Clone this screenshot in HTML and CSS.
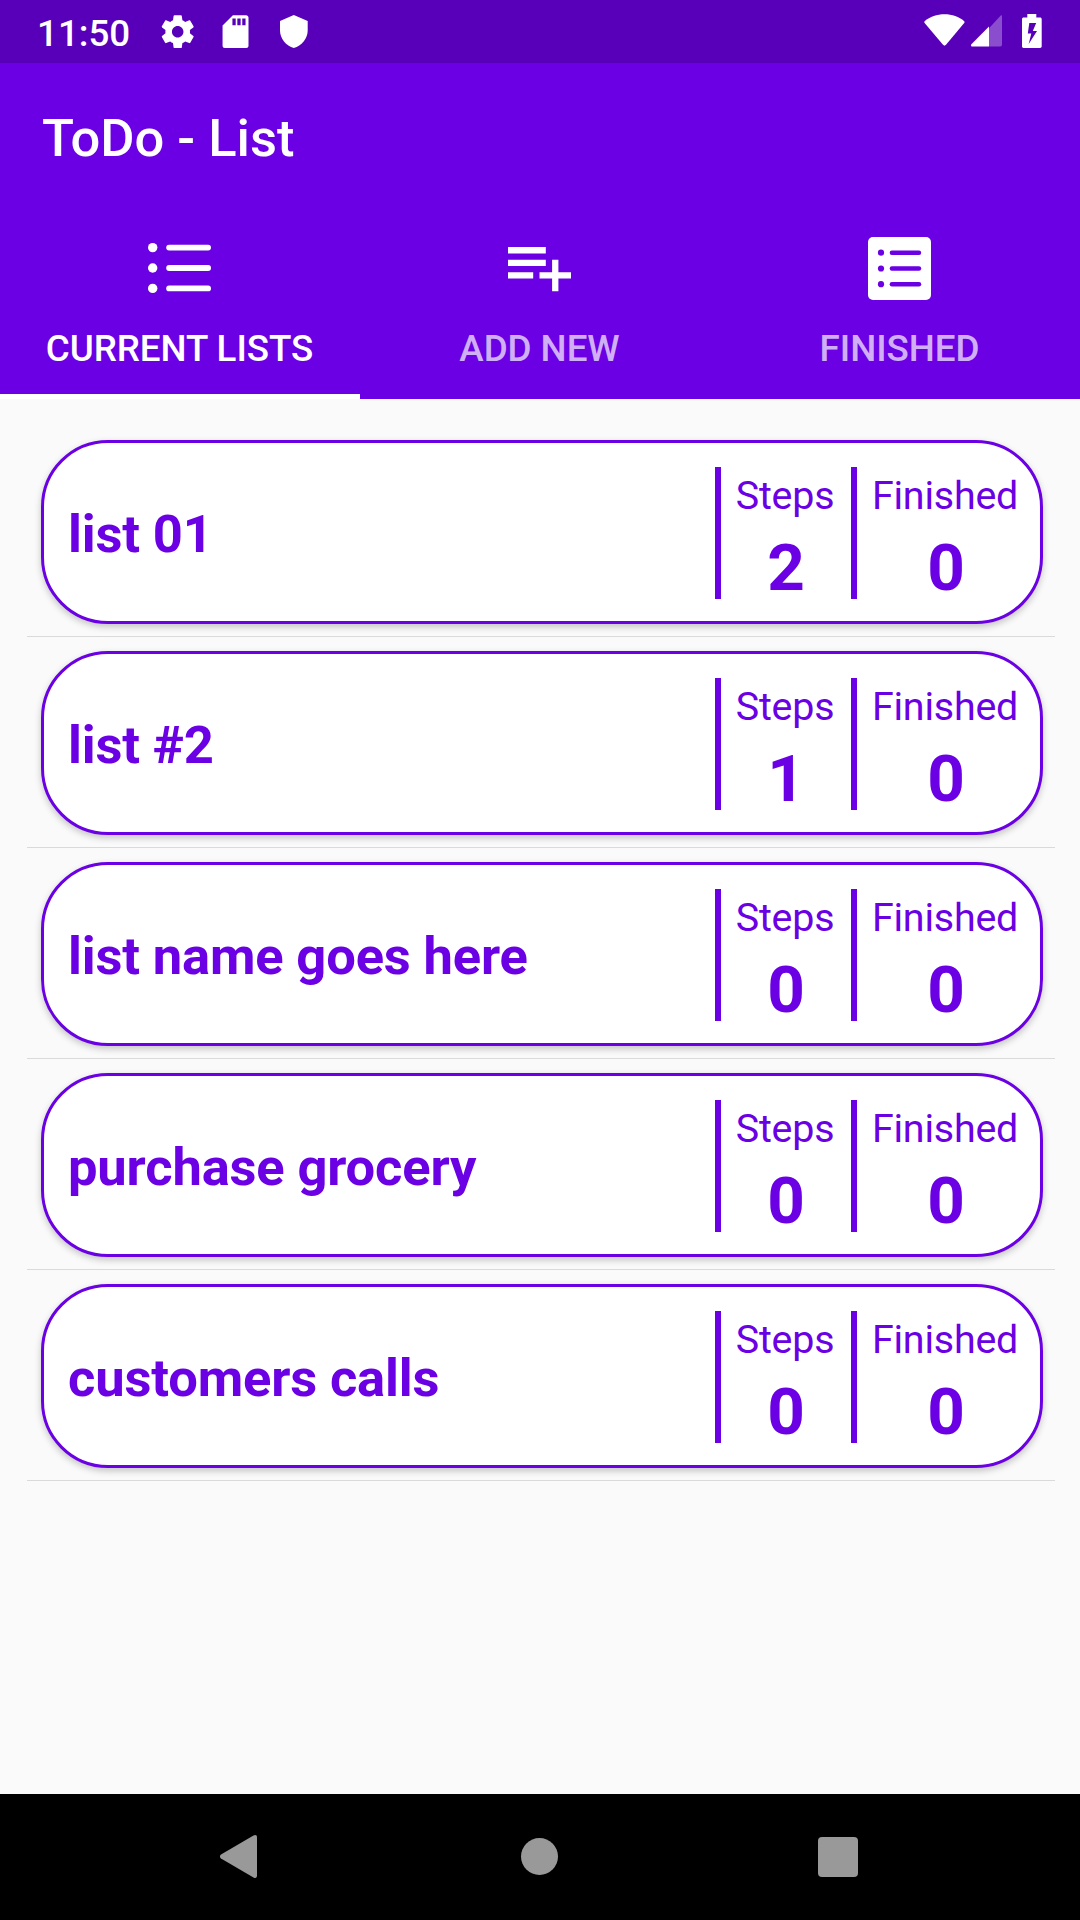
FILE: index.html
```html
<!DOCTYPE html>
<html lang="en">
<head>
	<meta charset="utf-8">
	<title>ToDo - List</title>
	<link rel="stylesheet" href="styles.css">
</head>
<body>
	<div class="screen">
		<!-- status bar -->
		<div class="status">
			<span class="time">11:50</span>
			<svg class="gear" viewBox="0 0 24 24"><path d="M19.43 12.98c.04-.32.07-.64.07-.98s-.03-.66-.07-.98l2.11-1.65c.19-.15.24-.42.12-.64l-2-3.46c-.12-.22-.39-.3-.61-.22l-2.49 1c-.52-.4-1.08-.73-1.69-.98l-.38-2.65C14.46 2.18 14.25 2 14 2h-4c-.25 0-.46.18-.49.42l-.38 2.65c-.61.25-1.17.59-1.69.98l-2.49-1c-.23-.09-.49 0-.61.22l-2 3.46c-.13.22-.07.49.12.64l2.11 1.65c-.04.32-.07.65-.07.98s.03.66.07.98l-2.11 1.65c-.19.15-.24.42-.12.64l2 3.46c.12.22.39.3.61.22l2.49-1c.52.4 1.08.73 1.69.98l.38 2.65c.03.24.24.42.49.42h4c.25 0 .46-.18.49-.42l.38-2.65c.61-.25 1.17-.59 1.69-.98l2.49 1c.23.09.49 0 .61-.22l2-3.46c.12-.22.07-.49-.12-.64l-2.11-1.65zM12 15.5c-1.93 0-3.5-1.57-3.5-3.5s1.57-3.5 3.5-3.5 3.5 1.57 3.5 3.5-1.57 3.5-3.5 3.5z"/></svg>
			<svg class="sd" viewBox="0 0 24 24"><path d="M18.3 2h-8L4 8.2V20.6c0 .8.6 1.4 1.4 1.4h13c.8 0 1.4-.6 1.4-1.4V3.4c0-.8-.6-1.4-1.5-1.4zM12 8h-2V4h2v4zm3 0h-2V4h2v4zm3 0h-2V4h2v4z"/></svg>
			<svg class="shield" viewBox="0 0 28 33"><path d="M13.8 0L27.7 6v9.5C27.7 23.500 21.500 31 13.800 33 6.100 31 0 23.500 0 15.500V6z"/></svg>
			<div class="status-right">
				<svg class="wifi" viewBox="0 0 41 32"><path d="M.6 7.200C6 2.500 13 .2 20.500.2S35 2.500 40.200 7.200c.5.5.5 1.200 0 1.800L22 30.800c-1 1.100-2 1.100-3 0L.600 9c-.5-.6-.5-1.300 0-1.800z"/></svg>
				<svg class="signal" viewBox="0 0 31 32"><path class="dim" d="M18 13.200L29.500.8C30.500 0 31 .3 31 1.500V29.500c0 1.300-.5 2-1.800 2H18z"/><path d="M18 11.500v20H1.200C0 31.500-.4 30.200.4 29.200z"/></svg>
				<svg class="battery" viewBox="0 0 20 34"><path fill-rule="evenodd" d="M5.300 0h9v3.500h3.700c1 0 1.700.7 1.700 1.700v27c0 1-.7 1.700-1.700 1.700h-16.300c-1 0-1.700-.7-1.700-1.700v-27c0-1 .7-1.700 1.700-1.700h3.600zM7.300 9L5.800 19.500h3.500l-2.600 10.500L15 17h-4.200L14.200 9z"/></svg>
			</div>
		</div>

		<div class="toolbar">ToDo - List</div>

		<!-- tabs -->
		<div class="tabs">
			<div class="tab active">
				<svg viewBox="0 0 63 63"><circle cx="4.700" cy="10.600" r="4.700"/><circle cx="4.700" cy="31" r="4.700"/><circle cx="4.700" cy="51.400" r="4.700"/><rect x="18.200" y="7.700" width="44.800" height="5.800" rx="2.900"/><rect x="18.200" y="28.100" width="44.800" height="5.800" rx="2.900"/><rect x="18.200" y="48.500" width="44.800" height="5.800" rx="2.900"/></svg>
				<span>CURRENT LISTS</span>
			</div>
			<div class="tab">
				<svg viewBox="2 2.800 20 20"><path d="M14 10H2v2h12v-2zm0-4H2v2h12V6zm4 8v-4h-2v4h-4v2h4v4h2v-4h4v-2h-4zM2 16h8v-2H2v2z"/></svg>
				<span>ADD NEW</span>
			</div>
			<div class="tab">
				<svg viewBox="0 0 63 63"><rect width="63" height="63" rx="5"/><g class="cut"><circle cx="13" cy="15.700" r="3.100"/><circle cx="13" cy="31.500" r="3.100"/><circle cx="13" cy="47.200" r="3.100"/><rect x="21.700" y="13.500" width="31.500" height="4.400" rx="2.200"/><rect x="21.700" y="29.300" width="31.500" height="4.400" rx="2.200"/><rect x="21.700" y="45" width="31.500" height="4.400" rx="2.200"/></g></svg>
				<span>FINISHED</span>
			</div>
		</div>

		<!-- lists -->
		<ul class="lists">
			<li>
				<div class="card">
					<h2>list 01</h2>
					<div class="stat steps"><p>Steps</p><b>2</b></div>
					<div class="stat finished"><p>Finished</p><b>0</b></div>
				</div>
			</li>
			<li>
				<div class="card">
					<h2>list #2</h2>
					<div class="stat steps"><p>Steps</p><b>1</b></div>
					<div class="stat finished"><p>Finished</p><b>0</b></div>
				</div>
			</li>
			<li>
				<div class="card">
					<h2>list name goes here</h2>
					<div class="stat steps"><p>Steps</p><b>0</b></div>
					<div class="stat finished"><p>Finished</p><b>0</b></div>
				</div>
			</li>
			<li>
				<div class="card">
					<h2>purchase grocery</h2>
					<div class="stat steps"><p>Steps</p><b>0</b></div>
					<div class="stat finished"><p>Finished</p><b>0</b></div>
				</div>
			</li>
			<li>
				<div class="card">
					<h2>customers calls</h2>
					<div class="stat steps"><p>Steps</p><b>0</b></div>
					<div class="stat finished"><p>Finished</p><b>0</b></div>
				</div>
			</li>
		</ul>

		<!-- navigation bar -->
		<div class="navbar">
			<svg class="back" viewBox="0 0 37 43"><path d="M1 19.500L33.500.6C35.500-.5 37 .2 37 2.500v38c0 2.300-1.500 3-3.500 1.900L1 23.500c-1.400-1-1.400-3 0-4z"/></svg>
			<div class="home"></div>
			<div class="recent"></div>
		</div>
	</div>
</body>
</html>
```
FILE: styles.css
```css
* {
	margin: 0;
	padding: 0;
	box-sizing: border-box;
}

body {
	font-family: Roboto, sans-serif;
	background-color: #fafafa;
}

svg {
	display: block;
	flex: none;
	fill: #fff;
}

.screen {
	display: flex;
	flex-direction: column;
	width: 1080px;
	height: 1920px;
	overflow: hidden;
}

.status {
	display: flex;
	flex: none;
	height: 63px;
	padding: 0 38px 0 37px;
	color: #fff;
	background-color: #5800b9;
}

.time {
	width: 121px;
	font-size: 36.75px;
	font-weight: 500;
	line-height: 67px;
}

.gear,
.sd {
	width: 39.4px;
	height: 39.4px;
	margin-top: 12px;
}

.sd {
	margin-left: 19px;
}

.shield {
	width: 28px;
	height: 33px;
	margin: 15px 0 0 24px;
}

.status-right {
	display: flex;
	margin-left: auto;
}

.wifi {
	width: 41px;
	height: 32px;
	margin-top: 14px;
}

.signal {
	width: 31px;
	height: 32px;
	margin: 15px 20px 0 6px;
}

.signal .dim {
	opacity: .3;
}

.battery {
	width: 20px;
	height: 34px;
	margin-top: 14px;
}

.toolbar {
	flex: none;
	height: 147px;
	padding: 0 42px;
	font-size: 52.5px;
	font-weight: 500;
	line-height: 151px;
	color: #fff;
	background-color: #6a00e3;
}

.tabs {
	display: flex;
	flex: none;
	height: 189px;
	background-color: #6a00e3;
}

.tab {
	display: flex;
	flex: 1;
	flex-direction: column;
	align-items: center;
	padding: 27px 1px 0 0;
	font-size: 36.75px;
	font-weight: 500;
	line-height: 43px;
	letter-spacing: -.05px;
	color: rgba(255, 255, 255, .7);
}

.tab svg {
	width: 63px;
	height: 63px;
	margin-bottom: 27px;
}

.tab .cut {
	fill: #6a00e3;
}

.tab.active {
	color: #fff;
	border-bottom: 5px solid #fff;
}

.lists {
	flex: 1;
	padding: 27px 25px 0 27px;
	list-style: none;
}

.lists li {
	padding: 14px 12px 12px 14px;
	border-bottom: 1px solid #dadada;
}

.card {
	display: flex;
	height: 184px;
	padding: 24px 5px 0 24px;
	color: #6a00e3;
	background-color: #fff;
	border: 3px solid #6a00e3;
	border-radius: 67px;
	box-shadow: 0 3px 7px rgba(0, 0, 0, .22);
}

.card h2 {
	flex: 1;
	font-size: 52.5px;
	font-weight: 700;
	line-height: 134px;
	letter-spacing: -.16px;
}

.stat {
	height: 132px;
	padding-top: 6px;
	text-align: center;
	border-left: 6px solid #6a00e3;
}

.steps {
	width: 136px;
}

.finished {
	width: 184px;
}

.stat p {
	padding-right: 2px;
	font-size: 39.4px;
	line-height: 46px;
	letter-spacing: -.2px;
}

.stat b {
	display: block;
	margin-top: 10px;
	font-size: 65.6px;
	line-height: 77px;
}

.navbar {
	display: flex;
	flex: none;
	align-items: center;
	height: 126px;
	padding: 0 222px 1px 220px;
	background-color: #000;
	justify-content: space-between;
}

.back {
	width: 37px;
	height: 43px;
	fill: #999;
}

.home {
	width: 37px;
	height: 37px;
	margin-left: 3px;
	background-color: #999;
	border-radius: 50%;
}

.recent {
	width: 40px;
	height: 40px;
	background-color: #999;
	border-radius: 4px;
}
```
